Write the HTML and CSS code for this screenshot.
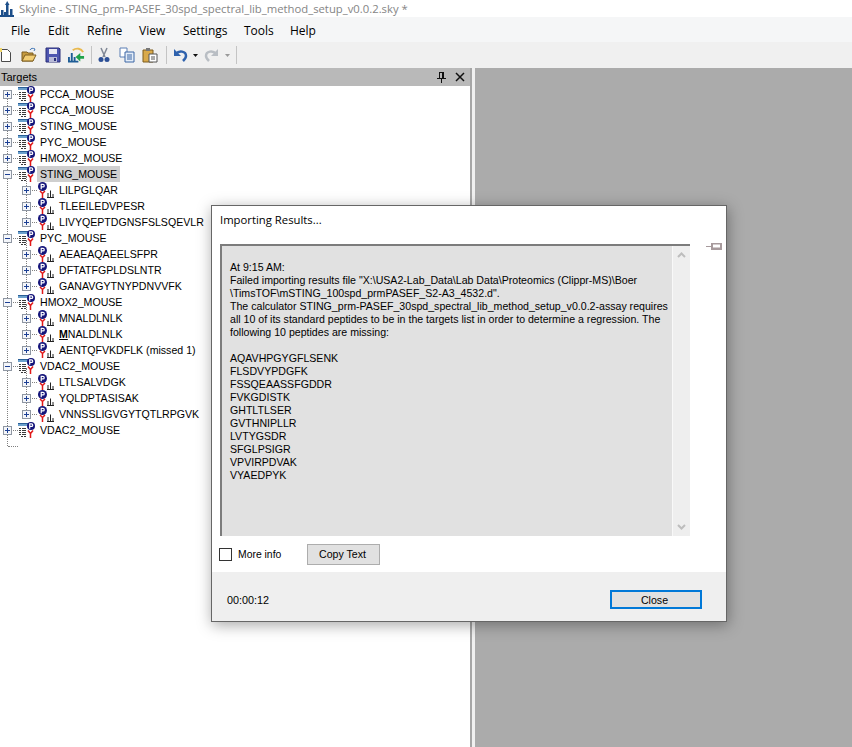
FILE: index.html
```html
<!DOCTYPE html>
<html lang="en">
<head>
<meta charset="utf-8">
<title>Skyline</title>
<link rel="stylesheet" href="styles.css">
</head>
<body>
<svg class="defs" width="0" height="0" aria-hidden="true">
  <symbol id="plus" viewBox="0 0 9 9"><rect x=".5" y=".5" width="8" height="8" fill="#f4f6fa" stroke="#8f97a3"/><path d="M2 4.500h5M4.500 2v5" stroke="#1c3f94"/></symbol>
  <symbol id="minus" viewBox="0 0 9 9"><rect x=".5" y=".5" width="8" height="8" fill="#f4f6fa" stroke="#8f97a3"/><path d="M2 4.500h5" stroke="#1c3f94"/></symbol>
  <symbol id="prot" viewBox="0 0 18 16">
    <rect x="0" y="1" width="10" height="3" fill="#6aa0cc"/><rect x="0" y="1" width="10" height="1" fill="#2a5f97"/>
    <path d="M1 6.500h2M4 6.500h4M1 8.500h2M4 8.500h4M1 10.500h2M4 10.500h4M1 12.500h2M4 12.500h4M3 14.500h2M6 14.500h2" stroke="#3a3a3a"/>
    <circle cx="13" cy="4" r="4" fill="#14147a"/>
    <path d="M11.700 6.700V1.900h1.800a1.200 1.200 0 0 1 0 2.500h-1.500" fill="none" stroke="#fff" stroke-width="1.200"/>
    <path d="M10 8.500l2.500 3l2.500-3M12.500 11.500v4.500" fill="none" stroke="#e01818" stroke-width="1.500"/>
  </symbol>
  <symbol id="pep" viewBox="0 0 16 16">
    <circle cx="4.500" cy="4.500" r="4.500" fill="#14147a"/>
    <path d="M3.200 7.200V2.400h1.800a1.200 1.200 0 0 1 0 2.500H3.500" fill="none" stroke="#fff" stroke-width="1.200"/>
    <path d="M2 9l2.500 2.500L7 9M4.500 11.500V16" fill="none" stroke="#e01818" stroke-width="1.500"/>
    <path d="M10 11v4M12.500 8.500V15M15 12v3M9 15.500h7" stroke="#222"/>
  </symbol>
</svg>

<header class="titlebar">
  <svg class="app-icon" viewBox="0 0 16 16" width="16" height="16" aria-hidden="true"><path d="M0 14h14v2H0zM1 9h2.500v5H1zM4 11h2v3H4zM6 3h2.500v11H6zM10 8h2.500v6H10z" fill="#1d4f8a"/><path d="M7.200 0l2.300 4h-4.500z" fill="#1d4f8a"/></svg>
  <span class="title-text">Skyline - STING_prm-PASEF_30spd_spectral_lib_method_setup_v0.0.2.sky *</span>
</header>

<nav class="menubar">
  <span class="menu m-file">File</span>
  <span class="menu m-edit">Edit</span>
  <span class="menu m-refine">Refine</span>
  <span class="menu m-view">View</span>
  <span class="menu m-settings">Settings</span>
  <span class="menu m-tools">Tools</span>
  <span class="menu">Help</span>
</nav>

<div class="toolbar">
  <svg class="tool t-new" viewBox="0 0 16 16" aria-hidden="true"><path d="M4.500 2.500h6l3 3v9h-9z" fill="#fff" stroke="#4a4a4a"/><path d="M0 1h5v4H0z" fill="#f1d66a"/></svg>
  <svg class="tool t-open" viewBox="0 0 16 16" aria-hidden="true"><path d="M1 5h5l1 1h5v8H1z" fill="#c69a3e" stroke="#7c5c1f"/><path d="M1 14l3-6h11l-3 6z" fill="#f2cd73" stroke="#7c5c1f"/><path d="M9 3c1-2 3-2 5-1l-1 2" fill="none" stroke="#3f74b5"/></svg>
  <svg class="tool t-save" viewBox="0 0 16 16" aria-hidden="true"><path d="M1 1h13l1 1v13H1z" fill="#4d55b0" stroke="#2b2f78"/><rect x="4" y="2" width="8" height="5" fill="#e9e9f4"/><rect x="4" y="10" width="8" height="5" fill="#b9bbd8"/><rect x="9" y="11" width="2" height="3" fill="#2b2f78"/></svg>
  <svg class="tool t-import" viewBox="0 0 18 16" aria-hidden="true"><path d="M0 15h11M1 10v5M4 6v9M7 10v5" stroke="#1d5c96" stroke-width="2"/><path d="M5 3c4-3 9-2 11 2" fill="none" stroke="#e9b94e" stroke-width="2"/><path d="M8 10l5-4v3h4v3h-4v3z" fill="#1fa24a"/></svg>
  <span class="sep s1"></span>
  <svg class="tool t-cut" viewBox="0 0 16 16" aria-hidden="true"><path d="M5 1l4 9M11 1L7 10" stroke="#7f8795" stroke-width="1.500"/><circle cx="5" cy="12.500" r="2.500" fill="#2c4f96"/><circle cx="11" cy="12.500" r="2.500" fill="#2c4f96"/></svg>
  <svg class="tool t-copy" viewBox="0 0 16 16" aria-hidden="true"><path d="M1 1h7v9H1z" fill="#fff" stroke="#5a7fb5"/><path d="M6 5h9v10H6z" fill="#e4edf8" stroke="#3d66a5"/><path d="M8 8h5M8 10h5M8 12h5" stroke="#3d66a5"/></svg>
  <svg class="tool t-paste" viewBox="0 0 16 16" aria-hidden="true"><path d="M1 3h10v12H1z" fill="#d9a94a" stroke="#7c5c1f"/><path d="M4 1h4v3H4z" fill="#777"/><path d="M7 7h8v8H7z" fill="#fff" stroke="#555"/><path d="M9 10h4M9 12h4" stroke="#555"/></svg>
  <span class="sep s2"></span>
  <svg class="tool t-undo" viewBox="0 0 16 16" aria-hidden="true"><path d="M3 7c3-4 10-3 10 2c0 2-1 3-3 5" fill="none" stroke="#2f62ad" stroke-width="2.500"/><path d="M1 2v7h7z" fill="#2f62ad"/></svg>
  <svg class="arrow a1" viewBox="0 0 5 3" aria-hidden="true"><path d="M0 0h5L2.500 3z" fill="#111"/></svg>
  <svg class="tool t-redo" viewBox="0 0 16 16" aria-hidden="true"><path d="M13 7c-3-4-10-3-10 2c0 2 1 3 3 5" fill="none" stroke="#b9bec4" stroke-width="2.500"/><path d="M15 2v7H8z" fill="#b9bec4"/></svg>
  <svg class="arrow a2" viewBox="0 0 5 3" aria-hidden="true"><path d="M0 0h5L2.500 3z" fill="#999"/></svg>
  <span class="sep s3"></span>
</div>

<main class="workspace">
  <section class="targets">
    <div class="pane-head">
      <span class="pane-title">Targets</span>
      <svg class="pin" viewBox="0 0 9 11" aria-hidden="true"><path d="M2 .5h5M2.500 .5v6M6.500 .5v6M0 6.500h9M4.500 7v4" stroke="#111" fill="none"/><path d="M5 1h1v5H5z" fill="#111"/></svg>
      <svg class="closex" viewBox="0 0 10 10" aria-hidden="true"><path d="M1 1l8 8M9 1l-8 8" stroke="#111" stroke-width="1.500"/></svg>
    </div>
    <div class="tree">
      <div class="row"><svg class="exp"><use href="#plus"/></svg><svg class="ico-prot"><use href="#prot"/></svg><span class="label">PCCA_MOUSE</span></div>
      <div class="row"><svg class="exp"><use href="#plus"/></svg><svg class="ico-prot"><use href="#prot"/></svg><span class="label">PCCA_MOUSE</span></div>
      <div class="row"><svg class="exp"><use href="#plus"/></svg><svg class="ico-prot"><use href="#prot"/></svg><span class="label">STING_MOUSE</span></div>
      <div class="row"><svg class="exp"><use href="#plus"/></svg><svg class="ico-prot"><use href="#prot"/></svg><span class="label">PYC_MOUSE</span></div>
      <div class="row"><svg class="exp"><use href="#plus"/></svg><svg class="ico-prot"><use href="#prot"/></svg><span class="label">HMOX2_MOUSE</span></div>

      <div class="row"><svg class="exp"><use href="#minus"/></svg><svg class="ico-prot"><use href="#prot"/></svg><span class="label selected">STING_MOUSE</span></div>
      <div class="children">
        <div class="row child"><svg class="exp"><use href="#plus"/></svg><svg class="ico-pep"><use href="#pep"/></svg><span class="label">LILPGLQAR</span></div>
        <div class="row child"><svg class="exp"><use href="#plus"/></svg><svg class="ico-pep"><use href="#pep"/></svg><span class="label">TLEEILEDVPESR</span></div>
        <div class="row child"><svg class="exp"><use href="#plus"/></svg><svg class="ico-pep"><use href="#pep"/></svg><span class="label">LIVYQEPTDGNSFSLSQEVLR</span></div>
      </div>

      <div class="row"><svg class="exp"><use href="#minus"/></svg><svg class="ico-prot"><use href="#prot"/></svg><span class="label">PYC_MOUSE</span></div>
      <div class="children">
        <div class="row child"><svg class="exp"><use href="#plus"/></svg><svg class="ico-pep"><use href="#pep"/></svg><span class="label">AEAEAQAEELSFPR</span></div>
        <div class="row child"><svg class="exp"><use href="#plus"/></svg><svg class="ico-pep"><use href="#pep"/></svg><span class="label">DFTATFGPLDSLNTR</span></div>
        <div class="row child"><svg class="exp"><use href="#plus"/></svg><svg class="ico-pep"><use href="#pep"/></svg><span class="label">GANAVGYTNYPDNVVFK</span></div>
      </div>

      <div class="row"><svg class="exp"><use href="#minus"/></svg><svg class="ico-prot"><use href="#prot"/></svg><span class="label">HMOX2_MOUSE</span></div>
      <div class="children">
        <div class="row child"><svg class="exp"><use href="#plus"/></svg><svg class="ico-pep"><use href="#pep"/></svg><span class="label">MNALDLNLK</span></div>
        <div class="row child"><svg class="exp"><use href="#plus"/></svg><svg class="ico-pep"><use href="#pep"/></svg><span class="label"><b class="mod">M</b>NALDLNLK</span></div>
        <div class="row child"><svg class="exp"><use href="#plus"/></svg><svg class="ico-pep"><use href="#pep"/></svg><span class="label">AENTQFVKDFLK (missed 1)</span></div>
      </div>

      <div class="row"><svg class="exp"><use href="#minus"/></svg><svg class="ico-prot"><use href="#prot"/></svg><span class="label">VDAC2_MOUSE</span></div>
      <div class="children">
        <div class="row child"><svg class="exp"><use href="#plus"/></svg><svg class="ico-pep"><use href="#pep"/></svg><span class="label">LTLSALVDGK</span></div>
        <div class="row child"><svg class="exp"><use href="#plus"/></svg><svg class="ico-pep"><use href="#pep"/></svg><span class="label">YQLDPTASISAK</span></div>
        <div class="row child"><svg class="exp"><use href="#plus"/></svg><svg class="ico-pep"><use href="#pep"/></svg><span class="label">VNNSSLIGVGYTQTLRPGVK</span></div>
      </div>

      <div class="row"><svg class="exp"><use href="#plus"/></svg><svg class="ico-prot"><use href="#prot"/></svg><span class="label">VDAC2_MOUSE</span></div>
      <div class="row end"></div>
    </div>
  </section>
  <div class="splitter"></div>
  <section class="graph-area"></section>
</main>

<section class="dialog">
  <div class="dialog-body">
    <h1 class="dialog-title">Importing Results...</h1>
    <div class="msg-line">
      <div class="msg">
        <div class="msg-text">
          <p>At 9:15 AM:</p>
          <p>Failed importing results file "X:\USA2-Lab_Data\Lab Data\Proteomics (Clippr-MS)\Boer</p>
          <p>\TimsTOF\mSTING_100spd_prmPASEF_S2-A3_4532.d".</p>
          <p>The calculator STING_prm-PASEF_30spd_spectral_lib_method_setup_v0.0.2-assay requires</p>
          <p>all 10 of its standard peptides to be in the targets list in order to determine a regression. The</p>
          <p>following 10 peptides are missing:</p>
          <p class="gap">AQAVHPGYGFLSENK</p>
          <p>FLSDVYPDGFK</p>
          <p>FSSQEAASSFGDDR</p>
          <p>FVKGDISTK</p>
          <p>GHTLTLSER</p>
          <p>GVTHNIPLLR</p>
          <p>LVTYGSDR</p>
          <p>SFGLPSIGR</p>
          <p>VPVIRPDVAK</p>
          <p>VYAEDPYK</p>
        </div>
        <div class="scroll">
          <svg class="chev" viewBox="0 0 9 6" aria-hidden="true"><path d="M1 5l3.500-3.500L8 5" fill="none" stroke="#bdbdbd" stroke-width="2"/></svg>
          <svg class="chev" viewBox="0 0 9 6" aria-hidden="true"><path d="M1 1l3.500 3.500L8 1" fill="none" stroke="#bdbdbd" stroke-width="2"/></svg>
        </div>
      </div>
      <svg class="dlg-pin" viewBox="0 0 16 7" aria-hidden="true"><path d="M0 3h5v1H0zM5 0h11v7H5z" fill="#a79a9c"/><path d="M7 1.500h7v3H7z" fill="#fff"/></svg>
    </div>
    <div class="actions">
      <label class="check"><span class="box"></span><span>More info</span></label>
      <button class="copy">Copy Text</button>
    </div>
  </div>
  <div class="dialog-foot">
    <span class="timer">00:00:12</span>
    <button class="close">Close</button>
  </div>
</section>
</body>
</html>
```

FILE: styles.css
```css
* { box-sizing: border-box; }
html, body { margin: 0; padding: 0; }
body {
  width: 852px;
  height: 747px;
  overflow: hidden;
  position: relative;
  background: #f0f0f0;
  font-family: "Liberation Sans", Arial, sans-serif;
  font-size: 10.6px;
  color: #000;
  display: flex;
  flex-direction: column;
}
.defs { position: absolute; }

.titlebar {
  height: 17px;
  background: #fff;
  display: flex;
  align-items: center;
  gap: 3px;
  flex: none;
}
.app-icon { flex: none; }
.title-text {
  font-family: "Open Sans", sans-serif;
  font-size: 11.3px;
  color: #858585;
}

.menubar {
  height: 25px;
  background: #f5f6f7;
  display: flex;
  align-items: center;
  padding: 1px 0 0 11px;
  flex: none;
  font-family: "Open Sans", sans-serif;
  font-size: 12px;
}
.m-file { width: 37px; }
.m-edit { width: 39px; }
.m-refine { width: 52px; }
.m-view { width: 44px; }
.m-settings { width: 61px; }
.m-tools { width: 46px; }

.toolbar {
  height: 26px;
  background: #f0f0f0;
  display: flex;
  align-items: center;
  flex: none;
}
.tool { width: 16px; height: 16px; flex: none; }
.t-new { margin-left: -3px; }
.t-open { margin-left: 8px; }
.t-save { margin-left: 8px; }
.t-import { margin-left: 7px; width: 17px; }
.t-copy { margin-left: 7px; }
.t-paste { margin-left: 7px; }
.t-redo { margin-left: 5px; }
.arrow { width: 5px; height: 3px; flex: none; }
.a1 { margin-left: 4px; }
.a2 { margin-left: 6px; }
.sep { width: 1px; height: 18px; background: #c4c4c4; flex: none; }
.s1 { margin: 0 4px 0 6px; }
.s2 { margin: 0 6px 0 8px; }
.s3 { margin: 0 0 0 6px; }

.workspace {
  flex: 1;
  display: flex;
  min-height: 0;
}
.targets {
  width: 472px;
  background: #fff;
  border-right: 2px solid #a6a6a6;
  display: flex;
  flex-direction: column;
}
.pane-head {
  height: 18px;
  background: #b9b9b9;
  display: flex;
  align-items: center;
  padding: 0 5px 0 1px;
  flex: none;
}
.pane-title { font-size: 11px; flex: 1; }
.pin { width: 9px; height: 11px; margin-right: 9px; }
.closex { width: 10px; height: 10px; }

.tree {
  position: relative;
  flex: 1;
}
.tree::before {
  content: "";
  position: absolute;
  left: 7px;
  top: 8px;
  height: 352px;
  border-left: 1px dotted #808080;
}
.row {
  position: relative;
  height: 16px;
  display: flex;
  align-items: center;
}
.row::before {
  content: "";
  position: absolute;
  left: 8px;
  width: 10px;
  top: 8px;
  border-top: 1px dotted #808080;
}
.child::before { left: 27px; width: 10px; }
.exp {
  position: relative;
  width: 9px;
  height: 9px;
  margin-left: 3px;
  flex: none;
}
.child .exp { margin-left: 22px; }
.ico-prot {
  position: relative;
  width: 18px;
  height: 16px;
  margin-left: 6px;
  flex: none;
}
.ico-pep {
  position: relative;
  width: 16px;
  height: 16px;
  margin-left: 7px;
  flex: none;
}
.label {
  margin-left: 1px;
  padding: 0 3px;
  height: 16px;
  line-height: 16px;
  white-space: nowrap;
}
.child .label { margin-left: 2px; }
.selected { background: #cfcfcf; }
.mod { text-decoration: underline; }
.children { position: relative; }
.children::before {
  content: "";
  position: absolute;
  left: 26px;
  top: -6px;
  bottom: 8px;
  border-left: 1px dotted #808080;
}

.splitter { width: 3px; background: #f0f0f0; flex: none; }
.graph-area { flex: 1; background: #ababab; }

.dialog {
  position: absolute;
  left: 211px;
  top: 205px;
  width: 516px;
  height: 417px;
  background: #fff;
  border: 1px solid #666;
  box-shadow: 1px 3px 14px rgba(0, 0, 0, 0.35);
  display: flex;
  flex-direction: column;
}
.dialog-body { flex: 1; padding: 0 0 0 8px; display: flex; flex-direction: column; }
.dialog-title {
  margin: 0;
  height: 38px;
  line-height: 28px;
  font-weight: 400;
  font-family: "Open Sans", sans-serif;
  font-size: 11.3px;
}
.msg-line { display: flex; align-items: flex-start; }
.msg {
  width: 470px;
  height: 292px;
  background: #e1e1e1;
  border-top: 2px solid #7c7c7c;
  border-left: 2px solid #7c7c7c;
  display: flex;
  flex: none;
}
.msg-text { flex: 1; min-width: 0; padding: 15px 0 0 8px; line-height: 13px; white-space: nowrap; }
.msg-text p { margin: 0; }
.msg-text .gap { margin-top: 13px; }
.scroll {
  width: 18px;
  background: #eeeeee;
  border-left: 1px solid #f8f8f8;
  display: flex;
  flex-direction: column;
  justify-content: space-between;
  align-items: center;
  padding: 6px 0;
  flex: none;
}
.chev { width: 9px; height: 6px; }
.dlg-pin { width: 16px; height: 7px; margin-left: 16px; flex: none; position: relative; top: -1px; }
.actions { display: flex; align-items: center; height: 36px; }
.check { display: flex; align-items: center; width: 87px; font-size: 10.4px; }
.box {
  width: 13px;
  height: 13px;
  border: 1px solid #333;
  background: #fff;
  margin: 0 6px 0 -1px;
  flex: none;
}
.copy {
  width: 73px;
  height: 21px;
  padding: 0 2px 0 0;
  background: #e1e1e1;
  border: 1px solid #adadad;
  font: inherit;
  color: #000;
}
.dialog-foot {
  height: 49px;
  background: #efefef;
  display: flex;
  align-items: center;
  justify-content: space-between;
  padding: 5px 24px 0 15px;
  flex: none;
}
.timer { font-size: 10.8px; margin-top: 2px; }
.close {
  width: 92px;
  height: 19px;
  padding: 1px 3px 0 0;
  background: #e1e1e1;
  border: 2px solid #0078d7;
  font: inherit;
  color: #000;
}
```
